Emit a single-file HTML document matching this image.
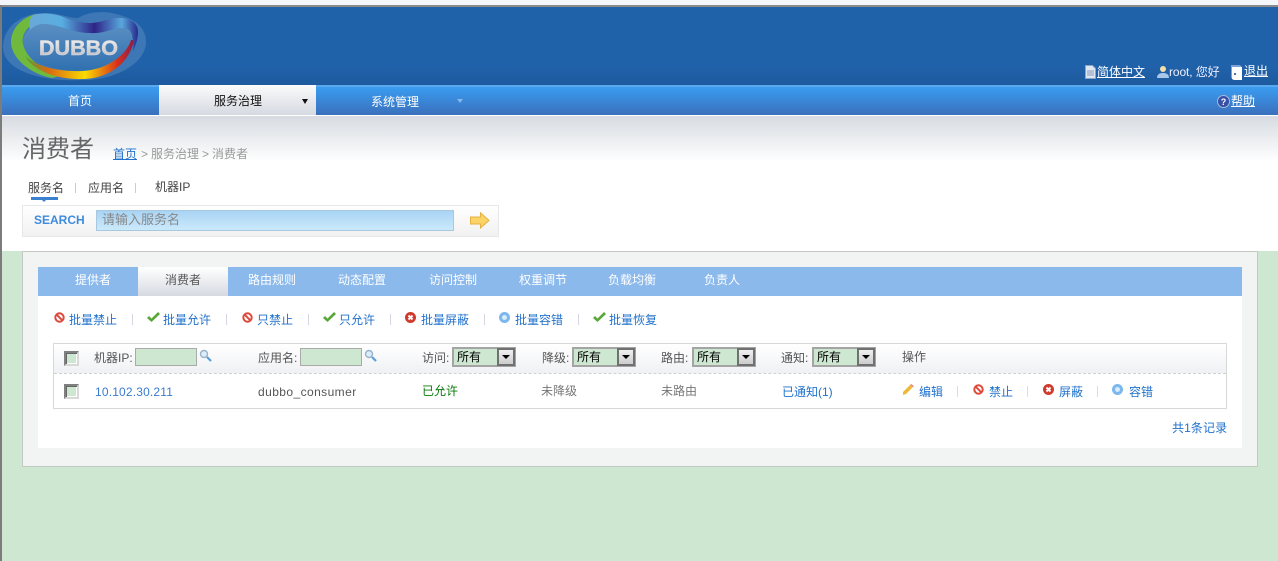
<!DOCTYPE html>
<html><head><meta charset="utf-8"><style>
html,body{margin:0;padding:0;width:1278px;height:561px;overflow:hidden;background:#cde7d0}
body{position:relative;font:12px/14px "Liberation Sans","WenQuanYi Zen Hei","Noto Sans CJK SC",sans-serif;color:#555}
.a,.t{position:absolute}
.t{white-space:nowrap}
.l{color:#2272cc}
.u{text-decoration:underline}
.w{color:#fff}
.sep{position:absolute;width:1px;height:11px;background:#dcd4e4}
.sel{position:absolute;width:60px;height:16px;border:2px solid #a4a4a4;background:#cde7d0;color:#000;font-size:12px;line-height:17px;margin:0}
.sel span{position:absolute;left:3px;top:0}
.sel i{position:absolute;right:-1px;top:-1px;width:14px;height:14px;border:2px solid #707070;background:linear-gradient(#f0f0f0,#ccc)}
.sel i:after{content:"";position:absolute;left:3px;top:5px;border:4px solid transparent;border-top:4px solid #000;border-bottom:0}
.ck{position:absolute;width:11px;height:11px;background:#cde7d0;border:2px solid;border-color:#808080 #d8d8d8 #d8d8d8 #808080;box-shadow:inset 1px 1px 0 #666,inset -1px -1px 0 #fff}
.inp{position:absolute;width:60px;height:16px;background:#cde7d0;border:1px solid #aaa}
</style></head><body>
<div class="a" style="left:0;top:0;width:1278px;height:5px;background:#f4f6fb"></div>
<div class="a" style="left:0;top:5px;width:1278px;height:2px;background:#8a8a8a"></div>
<div class="a" style="left:0;top:5px;width:2px;height:556px;background:#7c7c7c;z-index:5"></div>

<div class="a" style="left:0;top:7px;width:1278px;height:78px;background:linear-gradient(#2062aa,#2062aa 75%,#1e5a9e)"></div>
<svg class="a" style="left:0;top:0" width="160" height="85" viewBox="0 0 160 85">
<defs>
<linearGradient id="bot" x1="0" x2="1"><stop offset="0" stop-color="#5a9a38"/><stop offset=".22" stop-color="#d96a12"/><stop offset=".55" stop-color="#fbdb00"/><stop offset=".85" stop-color="#d8301a"/><stop offset="1" stop-color="#8a1e50"/></linearGradient>
<linearGradient id="top" x1="0" x2="1"><stop offset="0" stop-color="#6aa8d8"/><stop offset=".3" stop-color="#58aee0"/><stop offset=".6" stop-color="#2e2488"/><stop offset=".85" stop-color="#58a8dc"/><stop offset="1" stop-color="#28288c"/></linearGradient>
<linearGradient id="txt" x1="0" x2="0" y1="0" y2="1"><stop offset="0" stop-color="#f4f4f4"/><stop offset="1" stop-color="#b8b8c0"/></linearGradient>
<linearGradient id="ins" x1="0" x2="0" y1="0" y2="1"><stop offset="0" stop-color="#5b8fc2"/><stop offset="1" stop-color="#3070b0"/></linearGradient>
</defs>
<path d="M3 47C3 28 20 13 45 13C60 13 68 18 78 18C88 12 100 11 112 13C130 17 146 24 146 42C146 62 118 80 82 80C45 82 3 72 3 47Z" fill="#5a8cc0" opacity=".5"/>
<path d="M23 44C22 32 32 24 44 24C58 24 72 33 90 33C104 34 112 28 124 28C132 28 134 38 131 44C126 58 106 70 82 71C56 72 26 62 23 44Z" fill="url(#ins)"/>
<path d="M36 14C20 18 11 30 11 42C11 58 30 74 52 78L60 76C42 70 26 58 23 44C21 34 28 24 44 19Z" fill="#6fb93c"/>
<path d="M25 56C34 72 60 80 84 79C110 78 130 62 134 40L131 40C126 56 106 70 82 71C58 72 36 66 25 56Z" fill="url(#bot)"/>
<path d="M33 15C46 12 56 14 66 18C76 22 82 23 92 23C104 22 112 17 122 18C132 19 138 24 138 32C138 40 135 46 133 52C134 40 133 28 124 28C112 28 104 34 90 33C72 33 58 24 44 24C38 24 34 26 30 30C28 24 30 18 33 15Z" fill="url(#top)"/>
<text x="39" y="55" textLength="79" lengthAdjust="spacingAndGlyphs" font-family="Liberation Sans" font-weight="700" font-size="21" stroke="#d8d8dc" stroke-width=".5" fill="url(#txt)">DUBBO</text>
</svg>
<div class="t w u" style="left:1097px;top:65px">简体中文</div>
<svg class="a" style="left:1085px;top:65px" width="11" height="14"><path d="M.5.5h7l3 3v10H.5z" fill="#dfe7f3" stroke="#8ba4c8"/><path d="M2 6h7M2 8h7M2 10h7" stroke="#8a9ab8"/></svg>
<svg class="a" style="left:1157px;top:65px" width="12" height="14"><circle cx="6" cy="4" r="3" fill="#f3e0a8"/><path d="M0 13c0-4 3-5 6-5s6 1 6 5z" fill="#a8c8ea"/></svg>
<div class="t" style="left:1169px;top:65px;color:#eef;letter-spacing:-.1px">root, 您好</div>
<svg class="a" style="left:1231px;top:64px" width="12" height="17"><path d="M0 1h9l2 2v12H3l-3-1z" fill="#7da3d4"/><path d="M1 3h10v13H3l-2-1z" fill="#fff"/><circle cx="4" cy="10" r="1" fill="#246"/></svg>
<div class="t w u" style="left:1244px;top:64px">退出</div>

<div class="a" style="left:0;top:85px;width:1278px;height:2px;background:#5aa9ee"></div>
<div class="a" style="left:0;top:87px;width:1278px;height:28px;background:linear-gradient(#3a9cf0,#3a70bc)"></div>
<div class="a" style="left:0;top:115px;width:1278px;height:136px;background:#fff"></div>
<div class="a" style="left:0;top:116px;width:1278px;height:46px;background:linear-gradient(#d7dbe1,#fff)"></div>
<div class="a" style="left:159px;top:85px;width:157px;height:30px;background:linear-gradient(#fbfbfb,#d5d9e1)"></div>
<div class="t w" style="left:68px;top:94px">首页</div>
<div class="t" style="left:214px;top:94px;color:#111">服务治理</div>
<div class="a" style="left:302px;top:99px;border:3.5px solid transparent;border-top:5px solid #111;border-bottom:0"></div>
<div class="t w" style="left:371px;top:95px">系统管理</div>
<div class="a" style="left:457px;top:99px;border:3px solid transparent;border-top:4px solid #85b8ec;border-bottom:0"></div>
<svg class="a" style="left:1217px;top:95px" width="13" height="13"><circle cx="6.5" cy="6.5" r="6" fill="#3650a8" stroke="#a8b8d8"/><text x="6.5" y="10" text-anchor="middle" font-family="Liberation Sans" font-weight="700" font-size="9" fill="#fff">?</text></svg>
<div class="t w u" style="left:1231px;top:94px">帮助</div>

<div class="t" style="left:22px;top:135px;font-size:24px;line-height:30px;color:#666">消费者</div>
<div class="t l u" style="left:113px;top:147px">首页</div>
<div class="t" style="left:141px;top:147px;color:#999">&gt;</div>
<div class="t" style="left:151px;top:147px;color:#999">服务治理</div>
<div class="t" style="left:202px;top:147px;color:#999">&gt;</div>
<div class="t" style="left:212px;top:147px;color:#999">消费者</div>
<div class="t" style="left:28px;top:181px;color:#444">服务名</div>
<div class="a" style="left:31px;top:197px;width:27px;height:3px;background:#3a82d0"></div>
<div class="a" style="left:42px;top:200px;border:2px solid transparent;border-top:2px solid #3a82d0;border-bottom:0"></div>
<div class="a" style="left:75px;top:183px;width:1px;height:10px;background:#ccc"></div>
<div class="t" style="left:88px;top:181px;color:#444">应用名</div>
<div class="a" style="left:135px;top:183px;width:1px;height:10px;background:#ccc"></div>
<div class="t" style="left:155px;top:180px;color:#444">机器IP</div>

<div class="a" style="left:22px;top:205px;width:475px;height:30px;border:1px solid #e8e8e8;background:linear-gradient(#fff,#f1f1f1)"></div>
<div class="t" style="left:34px;top:213px;font-size:12px;font-weight:700;color:#3f8be0">SEARCH</div>
<div class="a" style="left:96px;top:210px;width:356px;height:19px;border:1px solid #a8c8e0;background:linear-gradient(#a8d4f4,#cbe9fb)"></div>
<div class="t" style="left:102px;top:213px;color:#888;font-size:13px">请输入服务名</div>
<svg class="a" style="left:470px;top:212px" width="20" height="17"><path d="M.5 5h10V.8L19 8.5 10.500 16v-4H.5z" fill="#fbd468" stroke="#e4b040"/></svg>

<div class="a" style="left:22px;top:251px;width:1234px;height:214px;background:#f2f4f3;border:1px solid #c4c8c4"></div>
<div class="a" style="left:38px;top:267px;width:1204px;height:29px;background:#8bb9ec"></div>
<div class="a" style="left:38px;top:296px;width:1204px;height:152px;background:#fff"></div>
<div class="a" style="left:138px;top:267px;width:90px;height:29px;background:linear-gradient(#fff,#d6dae1)"></div>
<div class="t w" style="left:75px;top:273px">提供者</div>
<div class="t" style="left:165px;top:273px;color:#555">消费者</div>
<div class="t w" style="left:248px;top:273px">路由规则</div>
<div class="t w" style="left:338px;top:273px">动态配置</div>
<div class="t w" style="left:429px;top:273px">访问控制</div>
<div class="t w" style="left:519px;top:273px">权重调节</div>
<div class="t w" style="left:608px;top:273px">负载均衡</div>
<div class="t w" style="left:704px;top:273px">负责人</div>

<svg width="0" height="0" style="position:absolute"><defs>
<g id="no"><circle cx="5.500" cy="5.500" r="4.200" fill="#fff" stroke="#dd4a3c" stroke-width="2"/><path d="M2.600 2.600l5.800 5.800" stroke="#dd4a3c" stroke-width="2"/></g>
<g id="ok"><path d="M0 6l2-2 2.500 2.500L11 0l2 2-8.500 8z" fill="#58a838"/></g>
<g id="x"><circle cx="5.500" cy="5.500" r="5.500" fill="#d03a2c"/><path d="M3.500 3.500l4 4M7.500 3.500l-4 4" stroke="#fff" stroke-width="2"/></g>
<g id="f"><circle cx="5.500" cy="5.500" r="5.500" fill="#7cb8ec"/><circle cx="5.500" cy="5.500" r="2.500" fill="#d8ecfb"/></g>
</defs></svg>
<svg class="a" style="left:54px;top:312px" width="11" height="11"><use href="#no"/></svg>
<div class="t l" style="left:69px;top:313px">批量禁止</div><div class="sep" style="left:132px;top:314px"></div>
<svg class="a" style="left:147px;top:312px" width="13" height="11"><use href="#ok"/></svg>
<div class="t l" style="left:163px;top:313px">批量允许</div><div class="sep" style="left:226px;top:314px"></div>
<svg class="a" style="left:242px;top:312px" width="11" height="11"><use href="#no"/></svg>
<div class="t l" style="left:257px;top:313px">只禁止</div><div class="sep" style="left:308px;top:314px"></div>
<svg class="a" style="left:323px;top:312px" width="13" height="11"><use href="#ok"/></svg>
<div class="t l" style="left:339px;top:313px">只允许</div><div class="sep" style="left:390px;top:314px"></div>
<svg class="a" style="left:405px;top:312px" width="11" height="11"><use href="#x"/></svg>
<div class="t l" style="left:421px;top:313px">批量屏蔽</div><div class="sep" style="left:484px;top:314px"></div>
<svg class="a" style="left:499px;top:312px" width="11" height="11"><use href="#f"/></svg>
<div class="t l" style="left:515px;top:313px">批量容错</div><div class="sep" style="left:578px;top:314px"></div>
<svg class="a" style="left:593px;top:312px" width="13" height="11"><use href="#ok"/></svg>
<div class="t l" style="left:609px;top:313px">批量恢复</div>

<div class="a" style="left:53px;top:343px;width:1172px;height:64px;border:1px solid #d8d8d8;background:#fff"></div>
<div class="a" style="left:54px;top:344px;width:1172px;height:29px;background:linear-gradient(#fff,#f0f1f4)"></div>
<div class="a" style="left:54px;top:373px;width:1172px;height:0;border-top:1px dashed #d0d0d0"></div>

<div class="ck" style="left:64px;top:351px"></div>
<div class="t" style="left:94px;top:351px">机器IP:</div>
<div class="inp" style="left:135px;top:348px"></div>
<svg class="a" style="left:199px;top:349px" width="14" height="14"><circle cx="5" cy="5" r="3.500" fill="#dcecf8" stroke="#98b4cc" stroke-width="1.400"/><path d="M8 8l4 4" stroke="#5a9ed8" stroke-width="2.200"/></svg>
<div class="t" style="left:258px;top:351px">应用名:</div>
<div class="inp" style="left:300px;top:348px"></div>
<svg class="a" style="left:364px;top:349px" width="14" height="14"><circle cx="5" cy="5" r="3.500" fill="#dcecf8" stroke="#98b4cc" stroke-width="1.400"/><path d="M8 8l4 4" stroke="#5a9ed8" stroke-width="2.200"/></svg>
<div class="t" style="left:422px;top:351px">访问:</div>
<div class="sel" style="left:452px;top:347px"><span>所有</span><i></i></div>
<div class="t" style="left:542px;top:351px">降级:</div>
<div class="sel" style="left:572px;top:347px"><span>所有</span><i></i></div>
<div class="t" style="left:661px;top:351px">路由:</div>
<div class="sel" style="left:692px;top:347px"><span>所有</span><i></i></div>
<div class="t" style="left:781px;top:351px">通知:</div>
<div class="sel" style="left:812px;top:347px"><span>所有</span><i></i></div>
<div class="t" style="left:902px;top:350px">操作</div>

<div class="ck" style="left:64px;top:384px"></div>
<div class="t" style="left:95px;top:385px;color:#3a7bd0;letter-spacing:.17px">10.102.30.211</div>
<div class="t" style="left:258px;top:385px;letter-spacing:.42px">dubbo_consumer</div>
<div class="t" style="left:422px;top:384px;color:#0a7a0a">已允许</div>
<div class="t" style="left:541px;top:384px;color:#777">未降级</div>
<div class="t" style="left:661px;top:384px;color:#777">未路由</div>
<div class="t l" style="left:782px;top:385px">已通知(1)</div>
<svg class="a" style="left:902px;top:384px" width="12" height="12"><path d="M1 8L8 1l3 2-7 7-3 1z" fill="#f0b838"/><path d="M8 1l1-1 3 2-1 1z" fill="#d88"/></svg>
<div class="t l" style="left:919px;top:385px">编辑</div><div class="sep" style="left:957px;top:386px;background:#d4e0e8"></div>
<svg class="a" style="left:973px;top:384px" width="11" height="11"><use href="#no"/></svg>
<div class="t l" style="left:989px;top:385px">禁止</div><div class="sep" style="left:1027px;top:386px;background:#d4e0e8"></div>
<svg class="a" style="left:1043px;top:384px" width="11" height="11"><use href="#x"/></svg>
<div class="t l" style="left:1059px;top:385px">屏蔽</div><div class="sep" style="left:1097px;top:386px;background:#d4e0e8"></div>
<svg class="a" style="left:1112px;top:384px" width="11" height="11"><use href="#f"/></svg>
<div class="t l" style="left:1129px;top:385px">容错</div>
<div class="t l" style="left:1172px;top:421px;letter-spacing:.1px">共1条记录</div>
</body></html>
